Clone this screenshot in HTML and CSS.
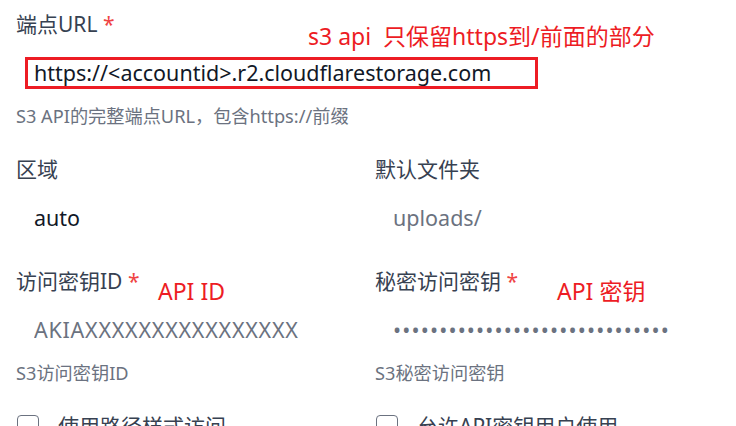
FILE: index.html
```html
<!DOCTYPE html>
<html lang="zh-CN">
<head>
<meta charset="utf-8">
<title>S3 配置</title>
<link rel="stylesheet" href="styles.css">
</head>
<body>
<div class="page">
  <form class="form">
    <div class="field full">
      <label class="label">端点URL <span class="req">*</span></label>
      <input class="input" type="text" value="https://&lt;accountid&gt;.r2.cloudflarestorage.com">
      <p class="help">S3 API的完整端点URL，包含https://前缀</p>
    </div>
    <div class="field">
      <label class="label">区域</label>
      <input class="input" type="text" value="auto">
    </div>
    <div class="field">
      <label class="label">默认文件夹</label>
      <input class="input" type="text" placeholder="uploads/">
    </div>
    <div class="field">
      <label class="label">访问密钥ID <span class="req">*</span></label>
      <input class="input keyid" type="text" placeholder="AKIAXXXXXXXXXXXXXXXX">
      <p class="help">S3访问密钥ID</p>
    </div>
    <div class="field">
      <label class="label">秘密访问密钥 <span class="req">*</span></label>
      <input class="input secret" type="password" value="abcdefghijabcdefghijabcdefghij">
      <p class="help">S3秘密访问密钥</p>
    </div>
    <label class="check"><span class="box"></span><span>使用路径样式访问</span></label>
    <label class="check"><span class="box"></span><span>允许API密钥用户使用</span></label>
  </form>

  <div class="mark mark-box"></div>
  <div class="note note-url">s3 api&nbsp;&nbsp;只保留https到/前面的部分</div>
  <div class="note note-id">API ID</div>
  <div class="note note-key">API 密钥</div>
</div>
</body>
</html>
```

FILE: styles.css
```css
html, body {
  margin: 0;
  padding: 0;
  overflow: hidden;
  background: #ffffff;
}

.page {
  position: relative;
  font-family: "Noto Sans", "Noto Sans CJK SC", sans-serif;
}

.form {
  display: grid;
  grid-template-columns: 1fr 1fr;
  column-gap: 14px;
  row-gap: 24px;
  padding: 10px 16px 0;
  margin: 0;
}

.field {
  display: flex;
  flex-direction: column;
  gap: 8px;
}

.full {
  grid-column: 1 / 3;
}

.label {
  font-size: 21px;
  line-height: 28px;
  color: #374151;
}

.req {
  color: #ef4444;
}

.input {
  font-family: "Noto Sans", "Noto Sans CJK SC", sans-serif;
  font-size: 21.5px;
  line-height: 28px;
  height: 52px;
  box-sizing: border-box;
  padding: 12px 18px;
  border: none;
  outline: none;
  background: transparent;
  color: #111827;
  width: 100%;
}

.input::placeholder {
  color: #6b7280;
  opacity: 1;
}

.keyid {
  letter-spacing: 0.75px;
}

.secret {
  color: #6b7280;
  letter-spacing: 1.15px;
}

.help {
  margin: -2px 0 3px;
  font-size: 18.2px;
  line-height: 24px;
  color: #6b7280;
}

.check {
  display: flex;
  align-items: center;
  gap: 19px;
  font-size: 21px;
  line-height: 28px;
  color: #374151;
}

.box {
  width: 22px;
  height: 22px;
  box-sizing: border-box;
  margin-left: 1px;
  border: 1.5px solid #6b7280;
  border-radius: 4px;
  flex: none;
}

/* red annotations drawn over the form */
.mark-box {
  position: absolute;
  left: 25px;
  top: 57px;
  width: 513px;
  height: 32px;
  box-sizing: border-box;
  border: 3px solid #ed1c24;
}

.note {
  position: absolute;
  color: #ed1c24;
  font-size: 23px;
  line-height: 30px;
  white-space: nowrap;
}

.note-url {
  left: 308px;
  top: 21px;
}

.note-id {
  left: 158px;
  top: 276px;
}

.note-key {
  left: 557px;
  top: 276px;
}
```
